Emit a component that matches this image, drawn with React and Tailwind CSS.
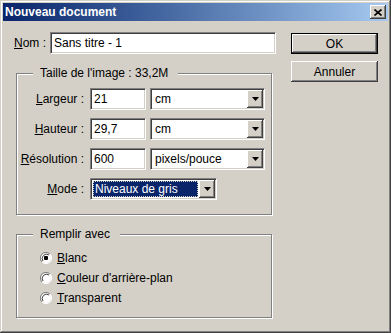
import React from 'react'

const sunken = 'bg-white border border-t-[#808080] border-l-[#808080] border-r-white border-b-white shadow-[inset_1px_1px_0_#404040,inset_-1px_-1px_0_#d4d0c8]'
const raised = 'bg-[#d4d0c8] shadow-[inset_-1px_-1px_0_#404040,inset_1px_1px_0_#fff,inset_-2px_-2px_0_#808080]'

function Arrow() {
  return (
    <div className={`${raised} w-[16px] h-[18px] mt-[1px] mr-[1px] flex items-center justify-center`}>
      <svg width="7" height="4" viewBox="0 0 7 4">
        <path d="M0 0h7L3.5 4z" fill="#000" />
      </svg>
    </div>
  )
}

function TextField({ value, width }) {
  return (
    <div className={`${sunken} h-[22px] flex items-center pl-[3px]`} style={{ width }}>
      {value}
    </div>
  )
}

function Select({ value, width, focused }) {
  return (
    <div className={`${sunken} h-[22px] flex items-start justify-between`} style={{ width }}>
      {focused ? (
        <div className="mt-[2px] ml-[2px] h-[16px] flex-1 mr-[1px] bg-[#0a246a] text-white outline-1 outline-dotted outline-[#d4d0c8] -outline-offset-1 flex items-center pl-[2px]">
          {value}
        </div>
      ) : (
        <div className="h-[20px] flex items-center pl-[4px]">{value}</div>
      )}
      <Arrow />
    </div>
  )
}

function GroupBox({ label, className, children }) {
  return (
    <div className={`relative border border-[#808080] shadow-[1px_1px_0_#fff,inset_1px_1px_0_#fff] ml-[2px] w-[256px] ${className}`}>
      <span className="absolute -top-[8px] left-[16px] bg-[#d4d0c8] px-[7px] pr-[10px] leading-[14px]">{label}</span>
      {children}
    </div>
  )
}

function Row({ label, children }) {
  return (
    <div className="flex items-center h-[22px]">
      <div className="w-[73px] pr-[6px] text-right">{label}</div>
      <div className="flex gap-[4px]">{children}</div>
    </div>
  )
}

function Radio({ checked, children }) {
  return (
    <div className="flex items-center h-[20px] gap-[5px]">
      <svg width="12" height="12" viewBox="0 0 12 12">
        <circle cx="6" cy="6" r="5.5" fill="#fff" stroke="#d4d0c8" />
        <path d="M10 2A5.5 5.5 0 0 0 2 10" fill="none" stroke="#808080" />
        <path d="M9 3A4.3 4.3 0 0 0 3 9" fill="none" stroke="#404040" />
        <path d="M10 2A5.5 5.5 0 0 1 2 10" fill="none" stroke="#fff" />
        {checked && <rect x="4" y="4" width="4" height="4" rx="1" fill="#000" />}
      </svg>
      <span>{children}</span>
    </div>
  )
}

export default function App() {
  return (
    <div className="w-[391px] h-[333px] bg-[#d4d0c8] p-[3px] text-[12px] text-black font-['Liberation_Sans',Arial,sans-serif] shadow-[inset_-1px_-1px_0_#404040,inset_1px_1px_0_#d4d0c8,inset_-2px_-2px_0_#808080,inset_2px_2px_0_#fff] flex flex-col">
      {/* Title bar */}
      <div className="h-[18px] bg-linear-to-r from-[#0a246a] to-[#a6caf0] flex items-center justify-between pl-[2px] pr-[2px]">
        <span className="text-white font-bold leading-none">Nouveau document</span>
        <div className={`${raised} w-[16px] h-[14px] flex items-center justify-center`}>
          <svg width="8" height="7" viewBox="0 0 8 7">
            <path d="M0.5 0.5l7 6M7.5 0.5l-7 6" stroke="#000" strokeWidth="1.6" />
          </svg>
        </div>
      </div>

      {/* Body */}
      <div className="flex pt-[11px] pl-[11px]">
        <div className="w-[262px] flex flex-col">
          <div className="flex items-center justify-between h-[22px]">
            <span><u>N</u>om :</span>
            <TextField value="Sans titre - 1" width={226} />
          </div>

          <GroupBox label="Taille de l'image : 33,2M" className="mt-[19px] h-[142px] pt-[14px] flex flex-col gap-[8px]">
            <Row label={<><u>L</u>argeur :</>}>
              <TextField value="21" width={56} />
              <Select value="cm" width={115} />
            </Row>
            <Row label={<><u>H</u>auteur :</>}>
              <TextField value="29,7" width={56} />
              <Select value="cm" width={115} />
            </Row>
            <Row label={<><u>R</u>ésolution :</>}>
              <TextField value="600" width={56} />
              <Select value="pixels/pouce" width={115} />
            </Row>
            <Row label={<><u>M</u>ode :</>}>
              <Select value="Niveaux de gris" width={127} focused />
            </Row>
          </GroupBox>

          <GroupBox label="Remplir avec" className="mt-[19px] h-[84px] pt-[13px] pl-[23px]">
            <Radio checked><u>B</u>lanc</Radio>
            <Radio><u>C</u>ouleur d'arrière-plan</Radio>
            <Radio><u>T</u>ransparent</Radio>
          </GroupBox>
        </div>

        <div className="ml-[15px] pt-[1px] flex flex-col gap-[7px]">
          <div className="w-[87px] h-[21px] border border-black">
            <div className={`${raised} w-full h-full flex items-center justify-center`}>OK</div>
          </div>
          <div className={`${raised} w-[87px] h-[21px] flex items-center justify-center`}>Annuler</div>
        </div>
      </div>
    </div>
  )
}
